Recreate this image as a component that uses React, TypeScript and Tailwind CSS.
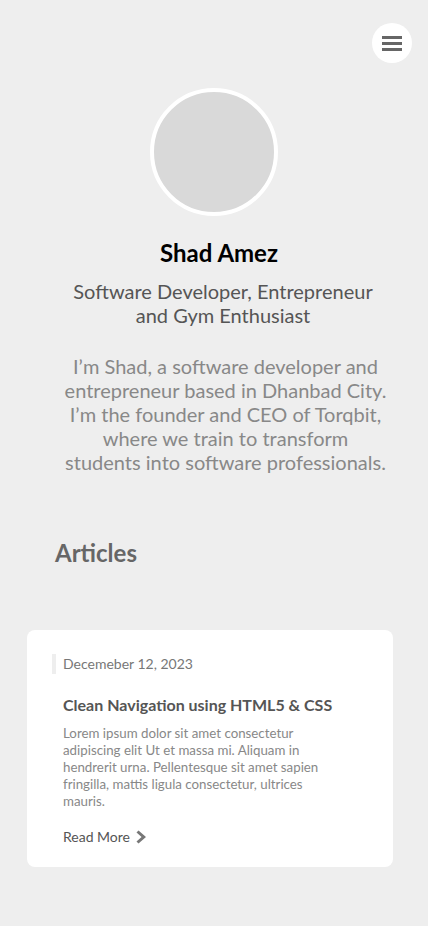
export default function App() {
  return (
    <div
      className="min-h-[926px] w-full bg-[#eeeeee] relative"
      style={{ fontFamily: 'Lato, "Open Sans", sans-serif' }}
    >
      {/* Menu */}
      <button className="absolute top-[23px] right-[16px] w-[40px] h-[40px] rounded-full bg-white flex flex-col items-center justify-center gap-[3px]">
        <span className="block w-[20px] h-[3px] bg-[#666]" />
        <span className="block w-[20px] h-[3px] bg-[#666]" />
        <span className="block w-[20px] h-[3px] bg-[#666]" />
      </button>

      {/* Profile */}
      <div className="flex flex-col items-center pt-[88px]">
        <div className="w-[128px] h-[128px] rounded-full border-[4px] border-white bg-[#d9d9d9]" />
        <h1 className="mt-[22px] pl-[10px] text-[24px] leading-[30px] font-bold text-black">Shad Amez</h1>
        <p className="mt-[11px] pl-[18px] text-[20px] leading-[24px] text-[#555] text-center">
          Software Developer, Entrepreneur
          <br />
          and Gym Enthusiast
        </p>
        <p className="mt-[27px] pl-[23px] text-[20px] leading-[24px] text-[#888] text-center">
          I’m Shad, a software developer and
          <br />
          entrepreneur based in Dhanbad City.
          <br />
          I’m the founder and CEO of Torqbit,
          <br />
          where we train to transform
          <br />
          students into software professionals.
        </p>
      </div>

      {/* Articles */}
      <h2 className="mt-[64px] ml-[55px] text-[24px] leading-[30px] font-bold text-[#666]">Articles</h2>

      <div className="mt-[62px] ml-[27px] mr-[35px] bg-white rounded-[8px] pl-[25px] pr-[36px] pt-[24px] pb-[20px]">
        <div className="border-l-[4px] border-[#eeeeee] pl-[7px] text-[14px] leading-[20px] text-[#777]">
          Decemeber 12, 2023
        </div>
        <div className="pl-[11px]">
          <h3 className="mt-[21px] text-[16px] leading-[20px] font-bold text-[#555]">
            Clean Navigation using HTML5 &amp; CSS
          </h3>
          <p className="mt-[10px] w-[282px] text-[13.3px] leading-[17px] text-[#888]">
            Lorem ipsum dolor sit amet consectetur adipiscing elit Ut et massa mi. Aliquam in hendrerit urna. Pellentesque sit amet sapien fringilla, mattis ligula consectetur, ultrices mauris.
          </p>
          <div className="mt-[17px] flex items-center gap-[6px] text-[14px] leading-[20px] text-[#555]">
            Read More
            <svg width="11" height="14" viewBox="0 0 11 14" className="text-[#777]">
              <path d="M2.5 0.5 L10 7 L2.5 13.5 L0.5 11.5 L5.6 7 L0.5 2.5 Z" fill="currentColor" />
            </svg>
          </div>
        </div>
      </div>
    </div>
  );
}
